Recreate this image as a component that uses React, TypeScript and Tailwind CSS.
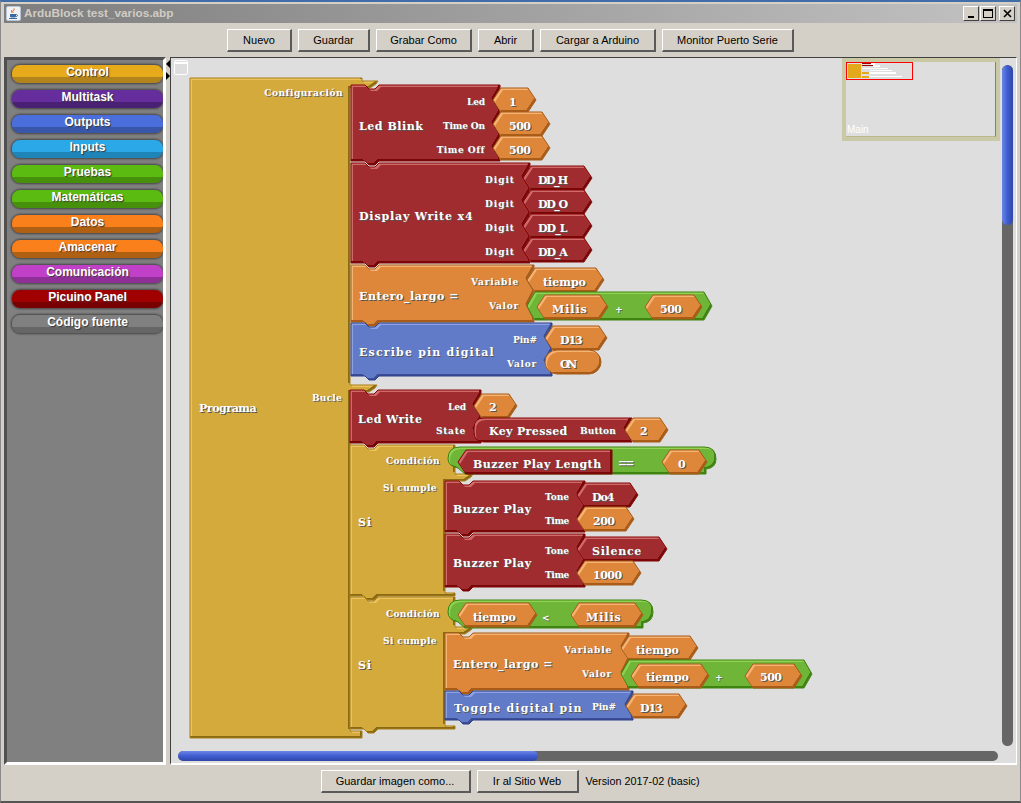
import React from "react";

type Pal = { b: string; l: string; d: string; o: string };
const RED: Pal = { b: "#a02c2f", l: "#cf6a6a", d: "#780808", o: "#860404" };
const ORG: Pal = { b: "#de8639", l: "#f5b374", d: "#a85c18", o: "#a85c18" };
const BLU: Pal = { b: "#627bc9", l: "#8da2e2", d: "#3c4f96", o: "#2c3f8c" };
const GRN: Pal = { b: "#6eb538", l: "#90d254", d: "#3f8410", o: "#3f8410" };
const GLD: Pal = { b: "#d5aa3c", l: "#ecc25c", d: "#8a6a12", o: "#a87e18" };

const block = (x1: number, y1: number, x2: number, y2: number, sockets: [number, number][] = []) => {
  let d = `M${x1} ${y1}H${x1 + 14}L${x1 + 18} ${y1 + 4}H${x1 + 24}L${x1 + 28} ${y1}H${x2}`;
  for (const [a, b] of sockets) d += `V${a}L${x2 - 7} ${(a + b) / 2}L${x2} ${b}`;
  d += `V${y2}H${x1 + 28}L${x1 + 24} ${y2 + 4}H${x1 + 18}L${x1 + 14} ${y2}H${x1}Z`;
  return d;
};
const hex = (x1: number, x2: number, y1: number, y2: number) => {
  const m = (y1 + y2) / 2;
  return `M${x1} ${m}L${x1 + 8} ${y1}H${x2 - 8}L${x2} ${m}L${x2 - 8} ${y2}H${x1 + 8}Z`;
};
const leftHexFlat = (x1: number, x2: number, y1: number, y2: number) => {
  const m = (y1 + y2) / 2;
  return `M${x1} ${m}L${x1 + 8} ${y1}H${x2}V${y2}H${x1 + 8}Z`;
};
const round = (x1: number, x2: number, y1: number, y2: number) => {
  const r = (y2 - y1) / 2;
  return `M${x1 + r} ${y1}H${x2 - r}A${r} ${r} 0 0 1 ${x2 - r} ${y2}H${x1 + r}A${r} ${r} 0 0 1 ${x1 + r} ${y1}Z`;
};
const condRound = (x1: number, x2: number, y1: number, y2: number) =>
  `M${x1 + 12} ${y1}H${x2 - 12}Q${x2} ${y1} ${x2} ${y1 + 12}Q${x2} ${y2 - 6} ${x2 - 10} ${y2 - 5}L${x2 - 10} ${y2}H${x2 - 20}V${y2}H${x1 + 17}L${x1 + 10} ${y2 - 6}Q${x1} ${y2 - 8} ${x1} ${y1 + 12}Q${x1} ${y1} ${x1 + 12} ${y1}Z`;
const keyPressed = (x1: number, x2: number, y1: number, y2: number) =>
  `M${x1 + 10} ${y1}H${x2}L${x2 - 7} ${(y1 + y2) / 2}L${x2} ${y2}H${x1 + 10}Q${x1} ${y2} ${x1} ${y2 - 10}V${y1 + 10}Q${x1} ${y1} ${x1 + 10} ${y1}Z`;
const siBlock = (y1: number, armEnd: number, y2: number) =>
  `M350 ${y1}H364L368 ${y1 + 4}H374L378 ${y1}H455V${armEnd}H473L471 ${armEnd + 3}L465 ${armEnd + 7}H445V${y2 - 3}H455V${y2}H378L374 ${y2 + 4}H368L364 ${y2}H350Z`;

const programa =
  "M190 78H362V81H378L376 84L370 88H350V385H377L375 388L369 392H350V731H362V738H190Z";

const shapes: { d: string; c: Pal }[] = [
  { d: programa, c: GLD },
  { d: siBlock(445, 474, 596), c: GLD },
  { d: siBlock(597, 627, 729), c: GLD },
  { d: block(351, 85, 500, 161, [[88, 112], [112, 136], [136, 160]]), c: RED },
  { d: hex(493, 536, 88, 112), c: ORG },
  { d: hex(493, 550, 112, 136), c: ORG },
  { d: hex(493, 550, 136, 160), c: ORG },
  { d: block(351, 163, 530, 263, [[166, 190], [190, 214], [214, 238], [238, 262]]), c: RED },
  { d: hex(523, 592, 166, 190), c: RED },
  { d: hex(523, 592, 190, 214), c: RED },
  { d: hex(523, 592, 214, 238), c: RED },
  { d: hex(523, 592, 238, 262), c: RED },
  { d: block(351, 265, 534, 322, [[268, 292], [292, 320]]), c: ORG },
  { d: hex(527, 604, 268, 292), c: ORG },
  { d: hex(527, 712, 292, 320), c: GRN },
  { d: hex(537, 608, 295, 319), c: ORG },
  { d: hex(645, 702, 295, 319), c: ORG },
  { d: block(351, 323, 552, 376, [[326, 350], [350, 374]]), c: BLU },
  { d: hex(545, 607, 326, 350), c: ORG },
  { d: round(545, 601, 350, 374), c: ORG },
  { d: block(350, 390, 481, 443, [[394, 418], [418, 442]]), c: RED },
  { d: hex(474, 517, 394, 418), c: ORG },
  { d: keyPressed(474, 632, 418, 442), c: RED },
  { d: hex(625, 668, 418, 442), c: ORG },
  { d: condRound(448, 716, 447, 474), c: GRN },
  { d: leftHexFlat(458, 612, 450, 474), c: RED },
  { d: hex(662, 707, 450, 474), c: ORG },
  { d: block(445, 481, 585, 532, [[483, 507], [507, 531]]), c: RED },
  { d: hex(577, 638, 483, 507), c: RED },
  { d: hex(577, 634, 507, 531), c: ORG },
  { d: block(445, 534, 585, 587, [[537, 561], [561, 585]]), c: RED },
  { d: hex(577, 667, 537, 561), c: RED },
  { d: hex(577, 641, 561, 585), c: ORG },
  { d: condRound(448, 653, 600, 628), c: GRN },
  { d: hex(458, 537, 603, 627), c: ORG },
  { d: hex(571, 643, 603, 627), c: ORG },
  { d: block(445, 633, 629, 690, [[636, 660], [660, 688]]), c: ORG },
  { d: hex(621, 698, 636, 660), c: ORG },
  { d: hex(621, 812, 660, 688), c: GRN },
  { d: hex(631, 709, 664, 688), c: ORG },
  { d: hex(745, 802, 664, 688), c: ORG },
  { d: block(445, 691, 633, 720, [[694, 718]]), c: BLU },
  { d: hex(626, 687, 694, 718), c: ORG },
];

type Lab = [string, number, number, "l" | "r"];
const small: Lab[] = [
  ["Configuración", 343, 92, "r"], ["Bucle", 342, 397, "r"],
  ["Led", 485, 101, "r"], ["Time On", 485, 125, "r"], ["Time Off", 485, 149, "r"],
  ["Digit", 515, 179, "r"], ["Digit", 515, 203, "r"], ["Digit", 515, 227, "r"], ["Digit", 515, 251, "r"],
  ["Variable", 519, 281, "r"], ["Valor", 519, 305, "r"],
  ["Pin#", 537, 339, "r"], ["Valor", 537, 363, "r"],
  ["Led", 466, 406, "r"], ["State", 466, 430, "r"], ["Button", 616, 430, "r"],
  ["Condición", 440, 460, "r"], ["Si cumple", 437, 487, "r"],
  ["Tone", 569, 496, "r"], ["Time", 569, 520, "r"], ["Tone", 569, 550, "r"], ["Time", 569, 574, "r"],
  ["Condición", 440, 613, "r"], ["Si cumple", 437, 640, "r"],
  ["Variable", 612, 649, "r"], ["Valor", 612, 673, "r"], ["Pin#", 616, 706, "r"],
  ["+", 615, 309, "l"], ["<", 542, 617, "l"], ["+", 715, 677, "l"],
];
const big: Lab[] = [
  ["Programa", 199, 408, "l"], ["Led Blink", 359, 126, "l"], ["Display Write x4", 359, 216, "l"],
  ["Entero_largo =", 359, 296, "l"], ["Escribe pin digital", 359, 352, "l"], ["Led Write", 358, 419, "l"],
  ["Key Pressed", 489, 431, "l"], ["Si", 358, 522, "l"], ["Buzzer Play Length", 473, 464, "l"], ["==", 618, 463, "l"],
  ["Buzzer Play", 453, 509, "l"], ["Buzzer Play", 453, 563, "l"], ["Si", 358, 665, "l"],
  ["Entero_largo =", 453, 664, "l"], ["Toggle digital pin", 454, 708, "l"],
  ["1", 509, 102, "l"], ["500", 509, 126, "l"], ["500", 509, 150, "l"],
  ["DD_H", 538, 180, "l"], ["DD_O", 538, 204, "l"], ["DD_L", 538, 228, "l"], ["DD_A", 538, 252, "l"],
  ["tiempo", 543, 282, "l"], ["Milis", 552, 309, "l"], ["500", 660, 309, "l"], ["D13", 560, 340, "l"], ["ON", 560, 364, "l"],
  ["2", 489, 407, "l"], ["2", 640, 431, "l"], ["0", 678, 464, "l"],
  ["Do4", 592, 497, "l"], ["200", 593, 521, "l"], ["Silence", 592, 551, "l"], ["1000", 593, 575, "l"],
  ["tiempo", 473, 617, "l"], ["Milis", 586, 617, "l"],
  ["tiempo", 636, 650, "l"], ["tiempo", 646, 677, "l"], ["500", 760, 677, "l"], ["D13", 640, 708, "l"],
];

const cats: [string, string][] = [
  ["Control", "bg-[linear-gradient(#e6aa1a_0_66%,#b4841c_66%)]"],
  ["Multitask", "bg-[linear-gradient(#662d9c_0_66%,#4a2075_66%)]"],
  ["Outputs", "bg-[linear-gradient(#4a6fdc_0_66%,#3a56a8_66%)]"],
  ["Inputs", "bg-[linear-gradient(#2aa8e8_0_66%,#1f84b8_66%)]"],
  ["Pruebas", "bg-[linear-gradient(#5cbb10_0_66%,#47900c_66%)]"],
  ["Matemáticas", "bg-[linear-gradient(#5cbb10_0_66%,#47900c_66%)]"],
  ["Datos", "bg-[linear-gradient(#f9801a_0_66%,#b06012_66%)]"],
  ["Amacenar", "bg-[linear-gradient(#f9801a_0_66%,#b06012_66%)]"],
  ["Comunicación", "bg-[linear-gradient(#c040c8_0_66%,#8f3096_66%)]"],
  ["Picuino Panel", "bg-[linear-gradient(#a00000_0_66%,#780000_66%)]"],
  ["Código fuente", "bg-[linear-gradient(#808080_0_66%,#666666_66%)]"],
];

/* Letter-spacing that gives a label the fixed pitch of the block language's font. */
const ctx = document.createElement("canvas").getContext("2d");
function pitchSpacing(text: string, font: string, pitch: number) {
  if (!ctx || text.length < 2) return 0;
  ctx.font = font;
  return (pitch * text.length - ctx.measureText(text).width) / text.length;
}

function Btn({ w, children }: { w: string; children: React.ReactNode }) {
  return (
    <div className={`${w} h-[23px] flex items-center justify-center bg-[#d4d0c8] border-t border-l border-t-white border-l-white border-r-2 border-b-2 border-r-[#5a5a5a] border-b-[#5a5a5a] text-[11px] text-black`}>
      {children}
    </div>
  );
}

function WinBtn({ children }: { children: React.ReactNode }) {
  return (
    <div className="w-[16px] h-[15px] bg-[#d4d0c8] border-t border-l border-t-white border-l-white border-r border-b border-r-[#404040] border-b-[#404040] flex items-center justify-center">
      {children}
    </div>
  );
}

const W = 846, H = 707, OX = 171, OY = 58;

function Canvas() {
  return (
    <div className="relative flex-1 h-full bg-[#dedede] border-t border-l border-t-[#404040] border-l-[#404040] border-b-2 border-b-white border-r border-r-white overflow-hidden">
      <svg className="absolute left-0 top-0" width={W} height={H} viewBox={`${OX} ${OY} ${W} ${H}`}>
        <defs>
          {shapes.map((s, i) => (
            <React.Fragment key={i}>
              <clipPath id={`p${i}`}><path d={s.d} /></clipPath>
              <clipPath id={`q${i}`}><path d={s.d} transform="translate(2 2)" /></clipPath>
            </React.Fragment>
          ))}
        </defs>
        <rect x="174.5" y="60.5" width="13" height="14" rx="1.5" fill="#dedede" stroke="#fff" />
        <rect x="175" y="62" width="12" height="2" fill="#fff" />
        {shapes.map((s, i) => (
          <g key={i}>
            <g clipPath={`url(#p${i})`}>
              <path d={s.d} fill={s.c.d} />
              <path d={s.d} fill={s.c.l} transform="translate(-2 -2)" />
              <g clipPath={`url(#q${i})`}>
                <path d={s.d} fill={s.c.b} transform="translate(-2 -2)" />
              </g>
            </g>
            <path d={s.d} fill="none" stroke={s.c.o} strokeWidth="1" />
          </g>
        ))}
      </svg>
      {small.map(([t, x, y, a], i) => (
        <span
          key={`s${i}`}
          className={`absolute whitespace-pre text-[9px] leading-[12px] font-bold text-white [text-shadow:1px_1px_0_#666] font-['DejaVu_Serif',serif] -translate-y-1/2 ${a === "r" ? "-translate-x-full" : ""}`}
          style={{ left: x - OX, top: y - OY + 1, letterSpacing: pitchSpacing(t, 'bold 9px "DejaVu Serif"', 6) }}
        >
          {t}
        </span>
      ))}
      {big.map(([t, x, y], i) => (
        <span
          key={`b${i}`}
          className="absolute whitespace-pre text-[11px] leading-[14px] font-bold text-white [text-shadow:1px_1px_0_#555] font-['DejaVu_Serif',serif] -translate-y-1/2"
          style={{ left: x - OX, top: y - OY + 1, letterSpacing: pitchSpacing(t, 'bold 11px "DejaVu Serif"', 7.15) }}
        >
          {t}
        </span>
      ))}
      <div className="absolute left-[671px] top-0 w-[158px] h-[83px] border-4 border-[#c9c9a6] bg-[#dedede]">
        <div className="relative w-full h-full border-r border-b border-r-[#808080] border-b-[#b8b890]">
          <svg className="absolute left-0 top-0" width="70" height="20" viewBox="0 0 70 20">
            <rect x="2" y="2" width="13" height="14" fill="#e3a81c" />
            <rect x="16" y="1" width="9" height="1" fill="#a00000" />
            <rect x="25" y="1" width="4" height="2" fill="#ffffff" />
            <rect x="16" y="3" width="11" height="1" fill="#a00000" />
            <rect x="27" y="3" width="7" height="2" fill="#ffffff" />
            <rect x="16" y="6" width="26" height="1" fill="#ffffff" />
            <rect x="24" y="8" width="22" height="1" fill="#ffffff" />
            <rect x="16" y="10" width="7" height="2" fill="#e3a81c" />
            <rect x="23" y="10" width="27" height="2" fill="#ffffff" />
            <rect x="16" y="14" width="7" height="2" fill="#e3a81c" />
            <rect x="23" y="14" width="33" height="1" fill="#ffffff" />
          </svg>
          <div className="absolute left-0 top-0 w-[67px] h-[18px] border border-[#ff0000]" />
          <span className="absolute left-[1px] bottom-[1px] text-[10px] leading-[11px] text-white font-['Liberation_Sans',sans-serif]">Main</span>
        </div>
      </div>
      <div className="absolute left-[831px] top-[7px] w-[11px] h-[681px] rounded-full bg-[#666666] overflow-hidden">
        <div className="w-full h-[160px] rounded-full bg-[linear-gradient(90deg,#6a86e6,#3f5cd0_50%,#2f46a8)]" />
      </div>
      <div className="absolute left-[7px] top-[693px] w-[820px] h-[10px] rounded-full bg-[#666666] overflow-hidden">
        <div className="w-[360px] h-full rounded-full bg-[linear-gradient(#6a86e6,#3f5cd0_50%,#2f46a8)]" />
      </div>
    </div>
  );
}

export default function App() {
  return (
    <div className="w-[1021px] h-[803px] bg-[#d4d0c8] flex flex-col overflow-hidden border-t-2 border-t-[#3f6ea8] border-b-2 border-b-[#555555] border-l border-l-[#8a8a8a] border-r border-r-[#8a8a8a] font-['Liberation_Sans',sans-serif]">
      <div className="mx-[3px] mt-[2px] h-[19px] flex items-center justify-between bg-[linear-gradient(90deg,#7e7e7e,#c2c2c2)]">
        <div className="flex items-center gap-[3px] pl-[2px]">
          <svg width="15" height="15" viewBox="0 0 15 15">
            <rect x="0.5" y="0.5" width="14" height="14" rx="1.5" fill="#f2f2f2" stroke="#b8c4d8" />
            <path d="M8 2.5c1 1.5-2 2.5-1 4M6 4c-1 1 0 2 0 3" fill="none" stroke="#e0561a" strokeWidth="1" />
            <path d="M4 8h6v2.5c0 .8-.8 1-3 1s-3-.2-3-1z" fill="#3b6aa0" />
            <path d="M10 8.5c2 0 2 2 0 2" fill="none" stroke="#3b6aa0" />
            <path d="M3 12.5h8" stroke="#3b6aa0" />
          </svg>
          <span className="text-[11.8px] font-bold text-[#d0ccc4]">ArduBlock test_varios.abp</span>
        </div>
        <div className="flex items-center gap-[1px] pr-[2px]">
          <WinBtn><span className="block w-[6px] h-[2px] bg-black mt-[7px]" /></WinBtn>
          <WinBtn><span className="block w-[10px] h-[9px] border border-t-2 border-black" /></WinBtn>
          <div className="w-[1px]" />
          <WinBtn>
            <svg width="9" height="9" viewBox="0 0 9 9"><path d="M1 1l7 7M8 1l-7 7" stroke="#000" strokeWidth="1.6" /></svg>
          </WinBtn>
        </div>
      </div>
      <div className="h-[34px] pt-[6px] flex justify-center gap-[6px]">
        <Btn w="w-[65px]">Nuevo</Btn>
        <Btn w="w-[72px]">Guardar</Btn>
        <Btn w="w-[96px]">Grabar Como</Btn>
        <Btn w="w-[56px]">Abrir</Btn>
        <Btn w="w-[116px]">Cargar a Arduino</Btn>
        <Btn w="w-[132px]">Monitor Puerto Serie</Btn>
      </div>
      <div className="h-[708px] mx-[3px] flex">
        <div className="w-[162px] h-full bg-[#808080] border-t-[3px] border-t-[#505050] border-l-[3px] border-l-[#505050] border-r-[3px] border-r-white border-b-[3px] border-b-white flex flex-col gap-[5px] pt-[4px] pl-[4px] overflow-hidden">
          {cats.map(([n, c]) => (
            <div
              key={n}
              className={`w-[153px] h-[20px] shrink-0 rounded-[9px] border border-[#555555] shadow-[0_0_2px_#3a3a3a] ${c} flex items-start justify-center text-[12px] leading-[15px] font-bold text-white [text-shadow:1px_1px_1px_#333]`}
            >
              {n}
            </div>
          ))}
        </div>
        <div className="w-[4px] h-full relative">
          <svg className="absolute left-0 top-[3px]" width="4" height="20" viewBox="0 0 4 20">
            <path d="M4 0v8L0 4zM0 12v8l4-4z" fill="#000" />
          </svg>
        </div>
        <Canvas />
      </div>
      <div className="flex-1 flex items-start justify-center gap-[6px] pt-[5px]">
        <Btn w="w-[150px]">Guardar imagen como...</Btn>
        <Btn w="w-[102px]">Ir al Sitio Web</Btn>
        <span className="w-[116px] h-[23px] flex items-center pl-[1px] text-[10.8px] text-black whitespace-nowrap">Version 2017-02 (basic)</span>
      </div>
    </div>
  );
}
